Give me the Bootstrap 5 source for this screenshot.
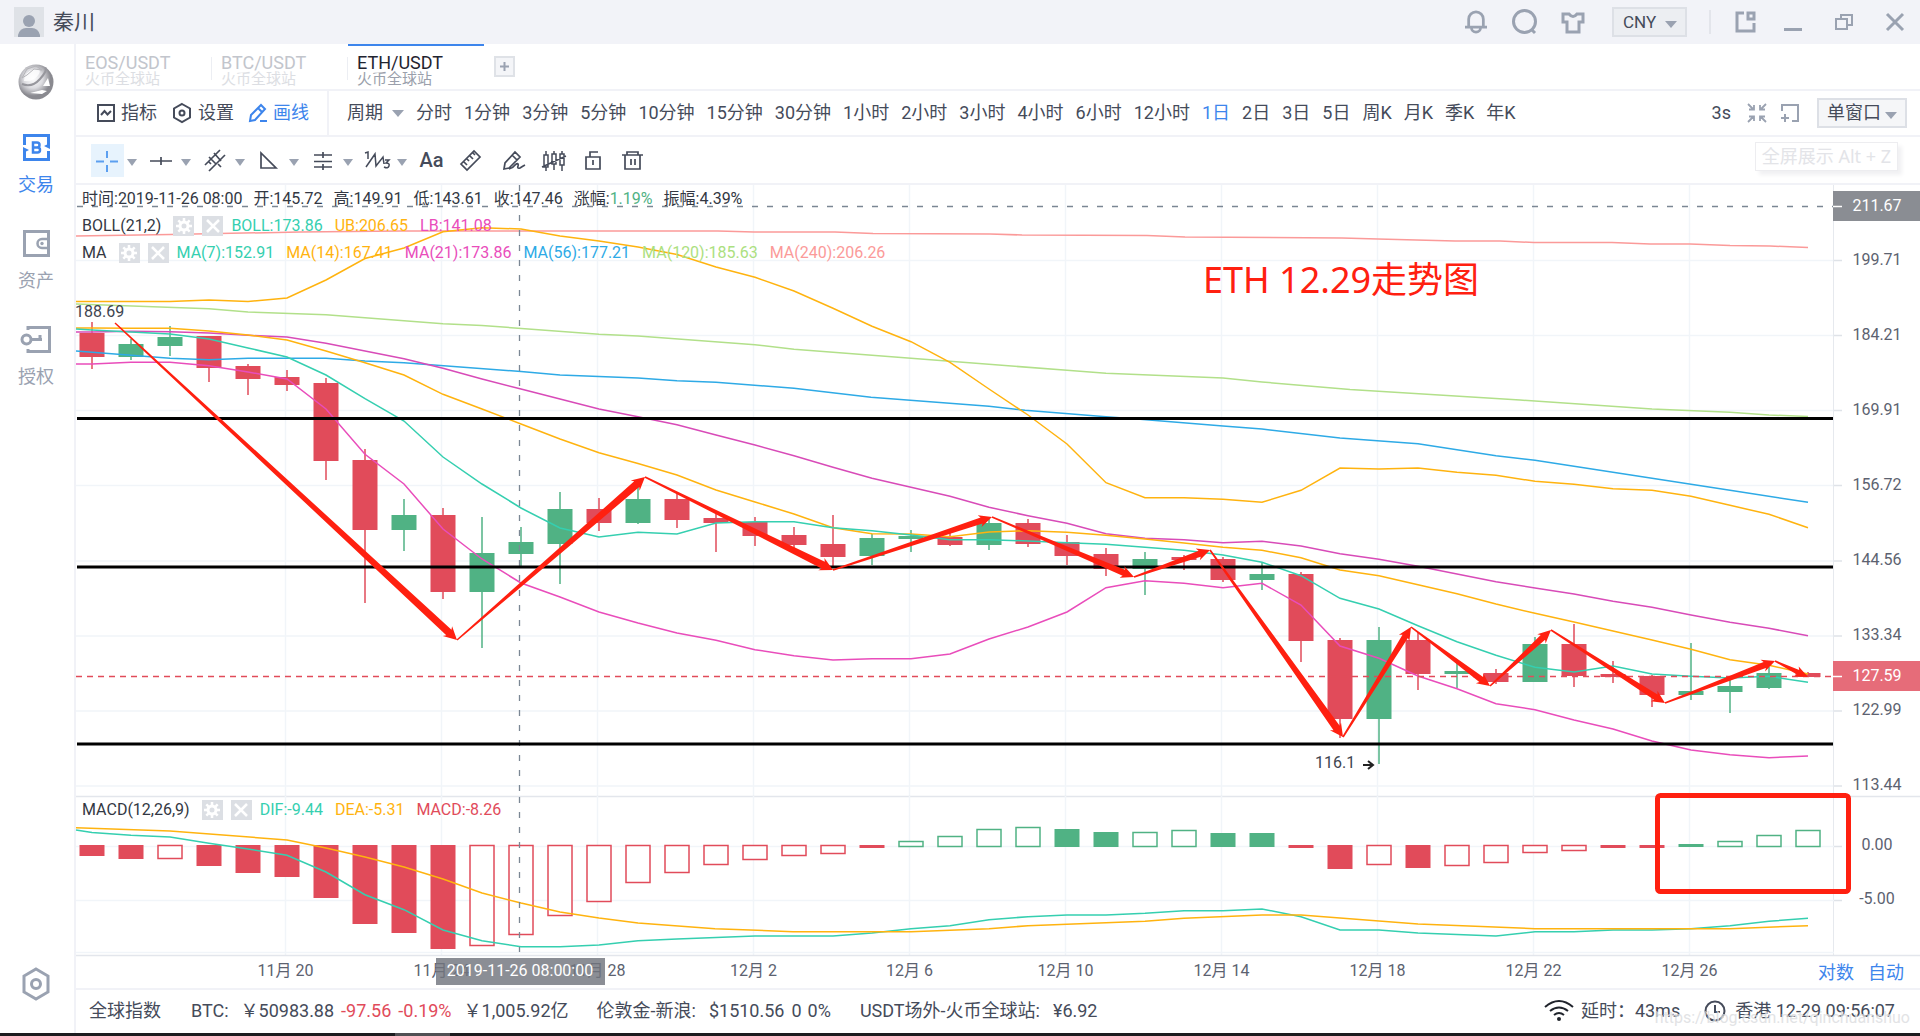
<!DOCTYPE html>
<html lang="zh-CN">
<head>
<meta charset="utf-8">
<meta name="viewport" content="width=device-width, initial-scale=1">
<title>ETH/USDT</title>
<link href="https://cdn.jsdelivr.net/npm/bootstrap@5.3.0/dist/css/bootstrap.min.css" rel="stylesheet">
<style>
:root{--ink:#454b5a;--mute:#9aa2b1;--blue:#3d85ec;--line:#f1f2f7;--red:#e14b5a;--green:#50b284;--teal:#35cfb0;--gold:#ffb30f;--pink:#e94dbb}
body{font-family:Roboto,"Noto Sans CJK SC",sans-serif;font-size:18px;line-height:24px;color:var(--ink);background:#fff;font-weight:400}
button{color:inherit;font:inherit}
svg{display:block;overflow:visible}
.ic{fill:none;stroke:currentColor;stroke-width:2}
.ic-bold{stroke-width:3}
.plain{background:none;border:0;padding:0;white-space:nowrap}
.app{min-height:100vh}
.titlebar{height:44px;background:#f2f3f8;padding:0 16px 0 14px;color:var(--mute)}
.user-name{font-size:21px;color:var(--ink);margin-left:9px}
.avatar{width:30px;height:30px;background:#dfe2e7}
.pick{position:relative;height:30px}
.pick select{appearance:none;height:30px;border:2px solid #dde0e6;background:#eceef2;color:var(--ink);border-radius:0;padding:0 24px 0 9px;font-size:17px;line-height:24px}
.pick::after,.tri{content:"";border:6px solid transparent;border-top:7px solid var(--mute);border-bottom:0;width:0;height:0;flex:none}
.pick::after{position:absolute;right:10px;top:14px;pointer-events:none}
.pick.win select{background:#f5f6f8;font-size:18px;width:90px;padding-left:8px}
.side{width:76px;border-right:2px solid var(--line);color:var(--mute);padding:20px 2px 32px 0}
.side-item{height:96px;color:var(--mute);text-decoration:none;gap:12px}
.side-item.on{color:var(--blue)}
.side-nav{margin-top:34px}
.strip{border-bottom:2px solid var(--line)}
.tabs{height:47px}
.pair{width:136px;height:45px;padding:5px 0 0 9px;text-align:left;color:#c2c5cc;line-height:17px;position:relative;background:none;border:0;border-top:2px solid transparent}
.pair small{display:block;font-size:15px;line-height:16px;color:#dcdee3}
.pair+.pair::before{content:"";position:absolute;left:-1px;top:11px;width:1px;height:23px;background:#eceef3}
.pair.on{border-top-color:var(--blue);color:#1f2430}
.pair.on small{color:#9a9fab}
.plus{width:21px;height:21px;margin-left:10px;border:2px solid #dfe2e7;background:#f4f5f8;padding:0;color:var(--mute)}
.bar1{height:46px;padding-right:13px}
.tools{width:253px;border-right:2px solid var(--line);padding-left:21px;gap:15px}
.tools button{gap:6px}
.periods{gap:12px;padding-left:18px}
.on-blue{color:var(--blue)}
.bar2{height:48px;padding-left:15px}
.bar2 .ic{stroke-width:1.7}
.tool{width:33px;height:33px}
.tool.on{background:#e7f3fd;color:#5c9ff0}
.tool.on .ic{stroke-width:2}
.caret{width:21px;height:33px;padding:4px 0 0 3px}
.caret .tri{border-width:7px 5px 0}
.hint{right:22px;top:5px;height:29px;border:1px solid #ededf0;padding:1px 6px;color:#e3e4e8;box-shadow:4px 4px 4px #f1f1f3;background:#fff;font-family:"Noto Sans","Noto Sans CJK SC",sans-serif}
.legend{left:6px;font-size:16px;line-height:27px;color:#333843;white-space:nowrap}
.legend .vals{gap:12px}
.sq{width:21px;height:20px;background:#dcdfe4;border:0;padding:0;color:#fff;margin-right:8px}
.sq svg{margin:auto}
.sq.first{margin-left:12px}
.c-teal{color:var(--teal)}.c-gold{color:var(--gold)}.c-pink{color:var(--pink)}.c-red{color:var(--red)}.c-green{color:var(--green)}.c-blue{color:#2eaae6}.c-lime{color:#ace07f}.c-rose{color:#fb9a99}
.plot text{font-size:16px;fill:#5c6270}
.modes{right:16px;top:5px;gap:14px}
.modes button{color:var(--blue)}
.status{height:43px;padding:0 25px 2px 13px;white-space:nowrap}
.mark-url{right:10px;bottom:5px;font-size:16px;line-height:20px;color:#d9dadd;text-shadow:1px 1px 0 #fff;opacity:.75}
.edge{height:3px;background:#1c1c1f;padding-left:395px}
.edge div{width:55px;height:3px;background:#505054}
</style>
<script src="https://cdn.jsdelivr.net/npm/bootstrap@5.3.0/dist/js/bootstrap.bundle.min.js"></script>
</head>
<body>
<div class="app d-flex flex-column">
<header class="titlebar d-flex align-items-center">
  <svg class="avatar" viewBox="0 0 30 30"><circle cx="15" cy="14" r="6" fill="#9aa2b1"/><path d="M4 30v-2q2-7 8-7h6q6 0 8 7v2z" fill="#9aa2b1"/></svg>
  <span class="user-name">秦川</span>
  <div class="ms-auto d-flex align-items-center">
    <button class="plain" aria-label="消息" style="margin-right:25px"><svg class="ic ic-bold" width="22" height="26" viewBox="0 0 24 26"><path d="M4 18v-8a8 8 0 0 1 16 0v8M0 18.500h24M7 19a5 5 0 0 0 10 0"/></svg></button>
    <button class="plain me-4" aria-label="搜索"><svg class="ic ic-bold" width="25" height="26" viewBox="0 0 25 26"><circle cx="12.500" cy="12.500" r="11"/><path d="M19 20l4 4"/></svg></button>
    <button class="plain" aria-label="皮肤" style="margin-right:27px"><svg class="ic ic-bold" width="24" height="22" viewBox="0 0 24 22"><path d="M2 3h6q4 5 8 0h6v8h-4v10H6V11H2z"/></svg></button>
    <span class="pick"><select aria-label="货币" style="width:75px"><option>CNY</option></select></span>
    <span style="width:2px;height:24px;background:#e3e5eb;margin:0 24px 0 22px"></span>
    <button class="plain" aria-label="弹出" style="margin-right:28px"><svg class="ic ic-bold" width="21" height="22" viewBox="0 0 21 22"><path d="M9 2H2v18h17v-8M13 2h6v6h-6z"/></svg></button>
    <button class="plain" aria-label="最小化" style="margin-right:33px"><svg class="ic ic-bold" width="18" height="22" viewBox="0 0 18 22"><path d="M0 18.500h18"/></svg></button>
    <button class="plain" aria-label="还原" style="margin-right:33px"><svg class="ic" width="18" height="18" viewBox="0 0 18 18"><path d="M1 6h11v10H1zM6 6V2h11v10h-5"/></svg></button>
    <button class="plain" aria-label="关闭"><svg class="ic ic-bold" width="18" height="18" viewBox="0 0 18 18"><path d="M1 1l16 16M17 1L1 17"/></svg></button>
  </div>
</header>
<div class="d-flex flex-grow-1">
<aside class="side d-flex flex-column align-items-center flex-shrink-0">
  <svg width="36" height="36" viewBox="0 0 36 36"><defs><radialGradient id="orb" cx=".42" cy=".4"><stop offset="0" stop-color="#fff"/><stop offset=".55" stop-color="#dcdce0"/><stop offset="1" stop-color="#8a8a90"/></radialGradient></defs><circle cx="18" cy="18" r="17.500" fill="url(#orb)"/><path d="M4 20Q14 24 22 15T27 4" fill="none" stroke="#97979d" stroke-width="2"/><path d="M6 17Q6 8 16 5q8-1 5 5-5 8-15 7z" fill="#fff" fill-opacity=".8"/><path d="M25 22l5-8 2 8zM12 29l12-3 5 1-5 3z" fill="#fff"/><path d="M4 14L9 5l9-3 6 4-8-1-7 6z" fill="none" stroke="#b5b5b9" stroke-width="1"/></svg>
  <nav class="side-nav d-flex flex-column">
    <a href="#" class="side-item on d-flex flex-column align-items-center"><svg class="ic ic-bold" width="27" height="27" viewBox="0 0 27 27"><path d="M1.500 11V1.500h24V11M25.500 17v8.500h-24V17"/><path d="M0 13l6 3-6 3zM27 9l-6 3 6 3z" fill="currentColor" stroke="none"/><path d="M10 8.500h4a2.500 2.500 0 0 1 0 5h-4zm0 5h4.500a2.500 2.500 0 0 1 0 5H10z" stroke-width="2.500"/></svg>交易</a>
    <a href="#" class="side-item d-flex flex-column align-items-center"><svg class="ic ic-bold" width="27" height="27" viewBox="0 0 27 27"><path d="M25.500 8V1.500h-24v24h24V19"/><path d="M27 9h-8a4.500 4.500 0 0 0 0 9h8" stroke-width="2.500"/><path d="M25.500 8v11"/><circle cx="19" cy="13.500" r="1.700" fill="currentColor" stroke="none"/></svg>资产</a>
    <a href="#" class="side-item d-flex flex-column align-items-center"><svg class="ic ic-bold" width="30" height="27" viewBox="0 0 30 27"><path d="M7 4V1.500h21.500v24H7V23"/><circle cx="5.500" cy="13.500" r="4.500"/><path d="M10 13.500h11M19 9v4"/></svg>授权</a>
  </nav>
  <button class="plain mt-auto" aria-label="系统设置"><svg class="ic ic-bold" width="28" height="34" viewBox="0 0 28 34"><path d="M14 2l12 7v16l-12 7-12-7V9z"/><circle cx="14" cy="17" r="4.500"/></svg></button>
</aside>
<main class="flex-grow-1 d-flex flex-column" style="min-width:0">
  <div class="tabs strip d-flex">
    <button class="pair">EOS/USDT<small>火币全球站</small></button>
    <button class="pair">BTC/USDT<small>火币全球站</small></button>
    <button class="pair on">ETH/USDT<small>火币全球站</small></button>
    <button class="plus align-self-center" aria-label="新增"><svg class="ic" width="17" height="17" viewBox="0 0 17 17"><path d="M8.500 4v9M4 8.500h9"/></svg></button>
  </div>
  <div class="bar1 strip d-flex align-items-stretch">
    <div class="tools d-flex align-items-center flex-shrink-0">
      <button class="plain d-flex align-items-center"><svg class="ic" width="18" height="18" viewBox="0 0 18 18"><path d="M1 1h16v16H1zM4 11l3.500-4 3 3.500L14 7"/></svg>指标</button>
      <button class="plain d-flex align-items-center"><svg class="ic" width="20" height="20" viewBox="0 0 20 20"><path d="M10 1l8 4.500v9L10 19l-8-4.500v-9z"/><circle cx="10" cy="10" r="2.500"/></svg>设置</button>
      <button class="plain on-blue d-flex align-items-center"><svg class="ic" width="18" height="18" viewBox="0 0 18 18"><path d="M1 17l1-6L12 1l4 4L6 16zM9 4l4 4M11 17h7"/></svg>画线</button>
    </div>
    <div class="periods d-flex align-items-center" id="periods">
      <button class="plain d-flex align-items-center" style="gap:9px">周期 <span class="tri"></span></button>
    </div>
    <div class="ms-auto d-flex align-items-center">
      <span>3s</span>
      <button class="plain" aria-label="全屏展示" style="margin:0 15px 0 17px;color:var(--mute)"><svg class="ic" width="18" height="18" viewBox="0 0 18 18"><path d="M0 0l5 5M1 5.500h5V1M18 0l-5 5M12 1v4.500h5M0 18l5-5M1 12.500h5V17M18 18l-5-5M12 17v-4.500h5" stroke-width="1.800"/></svg></button>
      <button class="plain" aria-label="新窗口" style="margin-right:18px;color:var(--mute)"><svg class="ic" width="18" height="18" viewBox="0 0 18 18"><path d="M1 7V1h16v16h-6M4 10v8M0 14h8"/></svg></button>
      <span class="pick win"><select aria-label="窗口"><option>单窗口</option></select></span>
    </div>
  </div>
  <div class="bar2 strip d-flex align-items-center position-relative" id="drawbar">
    <button class="plain tool on" aria-label="十字光标"><svg class="ic" viewBox="0 0 33 33"><path d="M16 7v7M16 21v7M5 17.500h8M19 17.500h8"/></svg></button><button class="plain caret" aria-label="更多光标"><span class="tri d-block"></span></button>
    <button class="plain tool" aria-label="线段"><svg class="ic" viewBox="0 0 33 33"><path d="M5 17h22M16 13v8"/></svg></button><button class="plain caret" aria-label="更多线段"><span class="tri d-block"></span></button>
    <button class="plain tool" aria-label="平行线"><svg class="ic" viewBox="0 0 33 33"><path d="M6 21L21 6M10 27L26 11M10 13l7 7M15 9l7 8M9 17l3 3M19 20l3 3"/></svg></button><button class="plain caret" aria-label="更多平行线"><span class="tri d-block"></span></button>
    <button class="plain tool" aria-label="图形"><svg class="ic" viewBox="0 0 33 33"><path d="M8 9v15h15z"/></svg></button><button class="plain caret" aria-label="更多图形"><span class="tri d-block"></span></button>
    <button class="plain tool" aria-label="斐波那契"><svg class="ic" viewBox="0 0 33 33"><path d="M7 11h18M7 17.500h18M7 23h18M16 8v6M16 20v6"/></svg></button><button class="plain caret" aria-label="更多斐波那契"><span class="tri d-block"></span></button>
    <button class="plain tool" aria-label="波浪"><svg class="ic" viewBox="0 0 33 33"><path d="M4 9l3-1v7M5 23l9-13 1 12 7-9 1 7M24 16h4l-3 3q4 0 3 3t-5 1" stroke-width="1.500"/></svg></button><button class="plain caret" aria-label="更多波浪"><span class="tri d-block"></span></button>
    <div class="d-flex" style="gap:7px">
    <button class="plain tool" style="font-size:20px;font-weight:500">Aa</button>
    <button class="plain tool" aria-label="标尺"><svg class="ic" viewBox="0 0 33 33"><path d="M6 20L19 7l6 6-13 13zM9 18l3 3M12 15l2 2M15 12l3 3M18 9l2 2"/></svg></button>
    <button class="plain tool" aria-label="画笔"><svg class="ic" viewBox="0 0 33 33"><path d="M9 25l1-6L20 8l5 5-11 11zM17 11l5 5M14 25q4-1 6-4 4-3 3 1-1 3 2 2 3-2 5-3"/></svg></button>
    <button class="plain tool" aria-label="K线"><svg class="ic" viewBox="0 0 33 33"><path d="M9 11h4v12H9zM17 10h4v10h-4zM25 10h4v11h-4zM11 7v4M11 23v4M19 7v3M19 20v6M27 7v3M27 21v6M7 23l24-11" stroke-width="1.500"/></svg></button>
    <button class="plain tool" aria-label="锁定"><svg class="ic" viewBox="0 0 33 33"><path d="M11 13h14v12H11zM15 13V8h8M18 16v5"/></svg></button>
    <button class="plain tool" aria-label="删除"><svg class="ic" viewBox="0 0 33 33"><path d="M7 11h21M10 11v14h15V11M12 11V8h11v3M16 15v6M20 15v6"/></svg></button>
    </div>
    <div class="hint position-absolute">全屏展示 Alt + Z</div>
  </div>
  <section class="position-relative">
    <svg class="plot" id="price" viewBox="76 185 1844 611" width="100%"></svg>
    <div class="legend position-absolute top-0" id="priceLegend">
      <div class="d-flex" style="gap:11px"><span>时间:2019-11-26 08:00</span><span>开:145.72</span><span>高:149.91</span><span>低:143.61</span><span>收:147.46</span><span>涨幅:<span class="c-green">1.19%</span></span><span>振幅:4.39%</span></div>
      <div class="d-flex align-items-center"><span>BOLL(21,2)</span><i class="tb"></i><div class="vals d-flex"><span class="c-teal">BOLL:173.86</span><span class="c-gold">UB:206.65</span><span class="c-pink">LB:141.08</span></div></div>
      <div class="d-flex align-items-center"><span>MA</span><i class="tb"></i><div class="vals d-flex"><span class="c-teal">MA(7):152.91</span><span class="c-gold">MA(14):167.41</span><span class="c-pink">MA(21):173.86</span><span class="c-blue">MA(56):177.21</span><span class="c-lime">MA(120):185.63</span><span class="c-rose">MA(240):206.26</span></div></div>
    </div>
  </section>
  <section class="position-relative">
    <svg class="plot" id="macd" viewBox="76 796 1844 160" width="100%"></svg>
    <div class="legend position-absolute top-0">
      <div class="d-flex align-items-center"><span>MACD(12,26,9)</span><i class="tb"></i><div class="vals d-flex"><span class="c-teal">DIF:-9.44</span><span class="c-gold">DEA:-5.31</span><span class="c-red">MACD:-8.26</span></div></div>
    </div>
  </section>
  <section class="position-relative strip">
    <svg class="plot" id="time" viewBox="76 956 1844 32" width="100%"></svg>
    <div class="modes position-absolute d-flex"><button class="plain">对数</button><button class="plain">自动</button></div>
  </section>
  <footer class="status d-flex align-items-center position-relative">
    <span>全球指数</span>
    <span style="margin-left:30px">BTC:</span>
    <span style="margin-left:12px">￥50983.88</span>
    <span class="c-red" style="margin-left:7px">-97.56</span>
    <span class="c-red" style="margin-left:7px">-0.19%</span>
    <span style="margin-left:12px">￥1,005.92亿</span>
    <span style="margin-left:28px">伦敦金-新浪:</span>
    <span style="margin-left:13px">$1510.56</span>
    <span style="margin-left:7px">0</span>
    <span style="margin-left:6px">0%</span>
    <span style="margin-left:29px">USDT场外-火币全球站:</span>
    <span style="margin-left:13px">¥6.92</span>
    <div class="ms-auto d-flex align-items-center">
      <svg class="ic" width="30" height="22" viewBox="0 0 30 22" style="color:#20242c;margin-right:7px"><path d="M1 7q14-12 28 0M6 11q9-7 18 0M10 15q5-4 10 0"/><circle cx="15" cy="19" r="2" fill="currentColor" stroke="none"/></svg>
      <span>延时：43ms</span>
      <svg class="ic" width="22" height="22" viewBox="0 0 22 22" style="margin:0 9px 0 24px"><circle cx="11" cy="11" r="9.500"/><path d="M11 5v7h5"/></svg>
      <span>香港 12-29 09:56:07</span>
    </div>
    <div class="mark-url position-absolute">https://blog.csdn.net/qinchuanshuo</div>
  </footer>
</main>
</div>
<div class="edge"><div></div></div>
</div>
<script>
const P=document.getElementById('periods');
'分时,1分钟,3分钟,5分钟,10分钟,15分钟,30分钟,1小时,2小时,3小时,4小时,6小时,12小时,1日,2日,3日,5日,周K,月K,季K,年K'.split(',').forEach(t=>{
  const b=document.createElement('button');b.className='plain'+(t==='1日'?' on-blue':'');b.textContent=t;P.append(b);
});
document.querySelectorAll('.tb').forEach(e=>{e.outerHTML=
 '<button class="sq first" aria-label="参数"><svg width="16" height="16" viewBox="0 0 16 16"><circle cx="8" cy="8" r="4" fill="none" stroke="#fff" stroke-width="3"/><path d="M8 0v3M8 13v3M0 8h3M13 8h3M2.300 2.300l2 2M11.700 11.700l2 2M2.300 13.700l2-2M11.700 4.300l2-2" stroke="#fff" stroke-width="2.500"/></svg></button>'+
 '<button class="sq" aria-label="移除"><svg width="14" height="14" viewBox="0 0 14 14"><path d="M1 1l12 12M13 1L1 13" stroke="#fff" stroke-width="2.500"/></svg></button>'});

const R='#e14b5a',G='#50b284',X=i=>92+39*i;
const rect=(x,y,w,h,a)=>`<rect x="${x}" y="${y}" width="${w}" height="${h}" ${a}/>`;
const seg=(x1,y1,x2,y2,c,w=1,d='')=>`<path d="M${x1} ${y1}L${x2} ${y2}" stroke="${c}" stroke-width="${w}" fill="none" ${d?`stroke-dasharray="${d}"`:''}/>`;
const label=(x,y,t,a='text-anchor="middle"')=>`<text x="${x}" y="${y}" ${a}>${t}</text>`;
const line=(s,c)=>`<polyline fill="none" stroke="${c}" stroke-width="1.500" points="${s}"/>`;
/* one y value per candle, with an optional point at the left edge */
const series=(a,c,head='')=>line(head+' '+a.map((y,i)=>X(i)+','+y).join(' '),c);
const cols=[...Array(10).keys()].map(k=>285.5+156*k);

/* price pane */
let s='';
[260.5,335.5,410.5,485.5,561,636,711,786].forEach((y,i)=>{
  s+=seg(76,y,1834,y,'#f1f5f9',1.5)+seg(1834,y,1842,y,'#dfe3e8',1.5);
  s+=label(1877,y+4,['199.71','184.21','169.91','156.72','144.56','133.34','122.99','113.44'][i]);
});
cols.forEach(x=>s+=seg(x,185,x,796,'#f1f5f9',1.5));
s+=seg(1833.5,185,1833.5,796,'#e6e9ee');
/* colour, body top, body bottom, high, low */
[[R,333,357,322,369],[G,344,357,339,360],[G,337,346,326,356],[R,336,368,336,382],[R,366,379,364,395],[R,377,385,370,391],[R,383,461,378,480],[R,460,530,449,603],[G,515,530,499,551],[R,515,592,508,599],[G,553,592,517,648],[G,542,554,527,566],[G,509,544,492,584],[R,509,523,498,531],[G,499,523,487,524],[R,499,520,493,528],[R,518,523,513,552],[R,522,536,517,546],[R,535,545,527,553],[R,544,557,515,567],[G,538,556,534,565],[G,536,539,530,552],[R,537,545,532,546],[G,523,545,518,550],[R,523,544,519,547],[R,542,556,535,565],[R,554,569,548,576],[G,559,569,552,595],[R,557,560,555,570],[R,559,580,557,582],[G,574,580,563,590],[R,574,641,572,662],[R,640,719,638,738],[G,640,719,627,764],[R,640,674,632,690],[G,671,674,663,688],[R,673,682,669,684],[G,644,682,637,682],[R,644,676,624,687],[R,674,677,661,683],[R,676,695,675,707],[G,691,695,643,700],[G,686,692,680,713],[G,673,688,667,689],[R,673,677,672,677]]
.forEach(([c,a,b,h,l],i)=>s+=seg(X(i),h,X(i),l,c,1.5)+rect(X(i)-12.5,a,25,b-a,`fill="${c}"`));
s+=line('76,236 170,234.500 300,232 400,231 718,231 754,232 835,232 873,233.500 990,234 1022,235 1147,235.500 1185,237 1342,238 1378,239 1455,241 1500,241 1534,242.500 1612,242.500 1650,244 1690,244 1730,245.500 1770,246 1808,247.500','#fb9a99');
s+=line('76,304 209,308.700 248,312 326,314.700 443,323.700 482,325.500 599,334.300 638,336 755,344.700 794,349.300 911,358.300 1067,370.300 1106,373.300 1223,378 1262,382 1350,389.500 1520,400 1652,409 1730,412.300 1769,415 1808,416.500','#b2e08a');
s+=line('76,351 170,358.300 209,359.700 248,358.300 326,358.300 365,361 404,362.700 521,371.500 560,375 638,378 677,380.700 716,382.300 794,388.300 871,397.300 989,406.300 1025,410.300 1106,416.700 1140,419.300 1223,426 1262,429 1340,438 1418,443.700 1496,455.700 1535,460.300 1652,478.300 1730,490.300 1808,502.300','#2eaae6');
s+=series([301.500,301.500,301.500,300,301.500,298,280,258.500,248,231.700,227.700,229,236,241,247,254.500,267,277.300,291,308.300,326.300,341.700,362.300,389,415,444,482.700,497.700,497.700,499.300,502.300,490.300,468,469,468,472.300,475.300,481.300,484.300,488.700,490.300,496.300,505.300,514.300,527.700],'#ffb30f','76,301.500');
s+=series([332,331.300,331.700,333,335.300,337,343.300,351,358.700,368.300,379,389,399,409,416.700,424.700,435,445,455.700,467.300,478.300,487.300,496.300,507.300,515.700,523.300,533.700,538.300,539.700,542.700,541.300,546,553.700,559.300,566.300,574,581.700,588,594,601.300,607.300,615,622.300,628.300,635.700],'#d84bb8','76,332');
s+=series([328,328.300,328.300,331,335,340,351,362.700,375,394.300,409,424,439,452.700,463.500,475,490,502,514,527.700,533.700,534,536.700,532,530.700,532.300,535.300,539,543,547.300,550.300,557.700,570,575.700,584.700,593.700,604,613.300,622,631,640,649.300,659.700,665.300,674],'#ffb30f','76,328');
s+=series([330,332,334,339,348,357,375,398.700,421,457,484,508,528,537,532.300,534,523,521.700,521.700,527.700,530.700,535,539.700,539.700,541,542.700,544.300,547.300,550.300,555,562.300,575.700,598.300,609,625.700,641.700,655.300,667.300,672,666,674,676.300,678,676.300,682.300],'#35cfb0','76,329');
s+=series([364,362.300,362.300,365.700,372,379,409,454.300,484,529,559,583,597,612,623,633,640.300,649.700,655.700,660,658.700,658.700,654,639,627,612,587.700,580.700,583.300,587.700,583.300,605,646,658.300,676,688.700,703.700,709.700,720,729,741,750,754.700,757.700,756],'#e94dbb','76,364');
s+=seg(76,676.500,1834,676.500,R,1.3,'6 5');
s+=seg(77,206.500,1834,206.500,'#7b8794',1.5,'6 9')+seg(519.5,185,519.5,796,'#7b8794',1.3,'6 9');
[418.5,567,744].forEach(y=>s+=seg(77,y,1833,y,'#000',3));
s+=label(75,317,'188.69','style="fill:#40454f"')+label(1315,768,'116.1','style="fill:#40454f"');
s+='<path d="M1363 765h9M1368 761l5 4-5 4" stroke="#222" stroke-width="2" fill="none"/>';
/* swing arrows: each shaft widens towards its head */
const A=[[115,323],[457,640],[645,477],[833,570],[992,517],[1134,577],[1210,550],[1343,737],[1411,627],[1490,686],[1551,630],[1665,703],[1775,661],[1808,677]];
for(let k=1;k<A.length;k++){
  const [x,y]=A[k-1],[u,v]=A[k],L=Math.hypot(u-x,v-y),dx=(u-x)/L,dy=(v-y)/L,w=L<50?2.5:L<170?3.2:3.8;
  const p=(d,o)=>(x+dx*d-dy*o).toFixed(1)+','+(y+dy*d+dx*o).toFixed(1);
  s+=`<polygon fill="#ff2010" points="${p(0,.8)} ${p(L-11,w)} ${p(L-13,w+3)} ${p(L,0)} ${p(L-13,-w-3)} ${p(L-11,-w)} ${p(0,-.8)}"/>`;
}
s+=`<text x="1203" y="293" style="font:36px 'Noto Sans','Noto Sans CJK SC',sans-serif;fill:#ff2010">ETH 12.29走势图</text>`;
s+=rect(1833,191,87,30,'fill="#8a8d93"')+seg(1833,206.5,1842,206.5,'#fff',1.5)+label(1877,211,'211.67','text-anchor="middle" style="fill:#fff"');
s+=rect(1833,661,87,30,'fill="#e66c79"')+seg(1833,676.5,1842,676.5,'#fff',1.5)+label(1877,681,'127.59','text-anchor="middle" style="fill:#fff"');
document.getElementById('price').innerHTML=s;

/* MACD pane */
s=seg(76,796.5,1920,796.5,'#e3e6ec',1.3)+seg(1833.5,796,1833.5,956,'#e6e9ee');
[846.5,900.5,952.5].forEach((y,i)=>s+=seg(76,y,1834,y,'#f1f5f9',1.5)+(i<2?seg(1834,y,1842,y,'#dfe3e8',1.5)+label(1877,y+3,['0.00','-5.00'][i]):''));
cols.forEach(x=>s+=seg(x,796,x,956,'#f1f5f9',1.5));
/* bar end y; h marks a hollow bar */
'856 859 859h 866 873 877 898 924 933 949 946h 935h 916h 902h 883h 873h 865h 860h 856h 854h 848 841h 836h 829h 827h 829 832 832h 830h 833 833 848 869 865h 868 866h 863h 853h 851h 848 848 844 841h 835h 830h'.split(' ').forEach((t,i)=>{
  const e=parseInt(t),up=e<847,c=up?G:R,a=up?e:845,b=up?847:e;
  s+=t.endsWith('h')?rect(X(i)-12,a+.5,24,b-a-1,`fill="#fff" stroke="${c}" stroke-width="1.500"`):rect(X(i)-12.5,a,25,b-a,`fill="${c}"`);
});
s+=series([832.500,835.300,837,843.300,849,855.300,872,894.700,909.700,930,940.700,946.700,946.700,945,940.700,939,937.500,936,936,936,933,928.700,925.700,919.700,916.700,915,915,913.300,910.700,910.700,909,916.700,930,930,933,934.500,936,931.700,931.700,930,930,928.700,925.700,921.300,918.300],'#35cfb0','76,830');
s+=line('76,827.700 170,831 287,840 326,848 365,857 404,867 443,879 482,893 521,903 560,912 599,918 638,923 715,928.700 793,931.700 911,931.700 989,928.700 1028,925.700 1145,921.300 1184,918.300 1262,915 1301,915 1418,924 1535,928.700 1730,928.700 1808,925.700','#ffb30f');
s+=seg(519.5,797,519.5,952,'#7b8794',1.3,'6 9');
s+=seg(76,955.5,1920,955.5,'#e3e6ec',1.3);
s+=rect(1657.5,795.5,191,96,'rx="3" fill="none" stroke="#ff2010" stroke-width="5"');
document.getElementById('macd').innerHTML=s;

/* time axis */
s='';
'11月 20,11月 24,11月 28,12月 2,12月 6,12月 10,12月 14,12月 18,12月 22,12月 26'.split(',').forEach((t,i)=>s+=label(cols[i],976,t));
s+=rect(436,958,169,27,'fill="#71757e" fill-opacity=".82"')+label(520,976,'2019-11-26 08:00:00','text-anchor="middle" style="fill:#fff"');
document.getElementById('time').innerHTML=s;
</script>
</body>
</html>
